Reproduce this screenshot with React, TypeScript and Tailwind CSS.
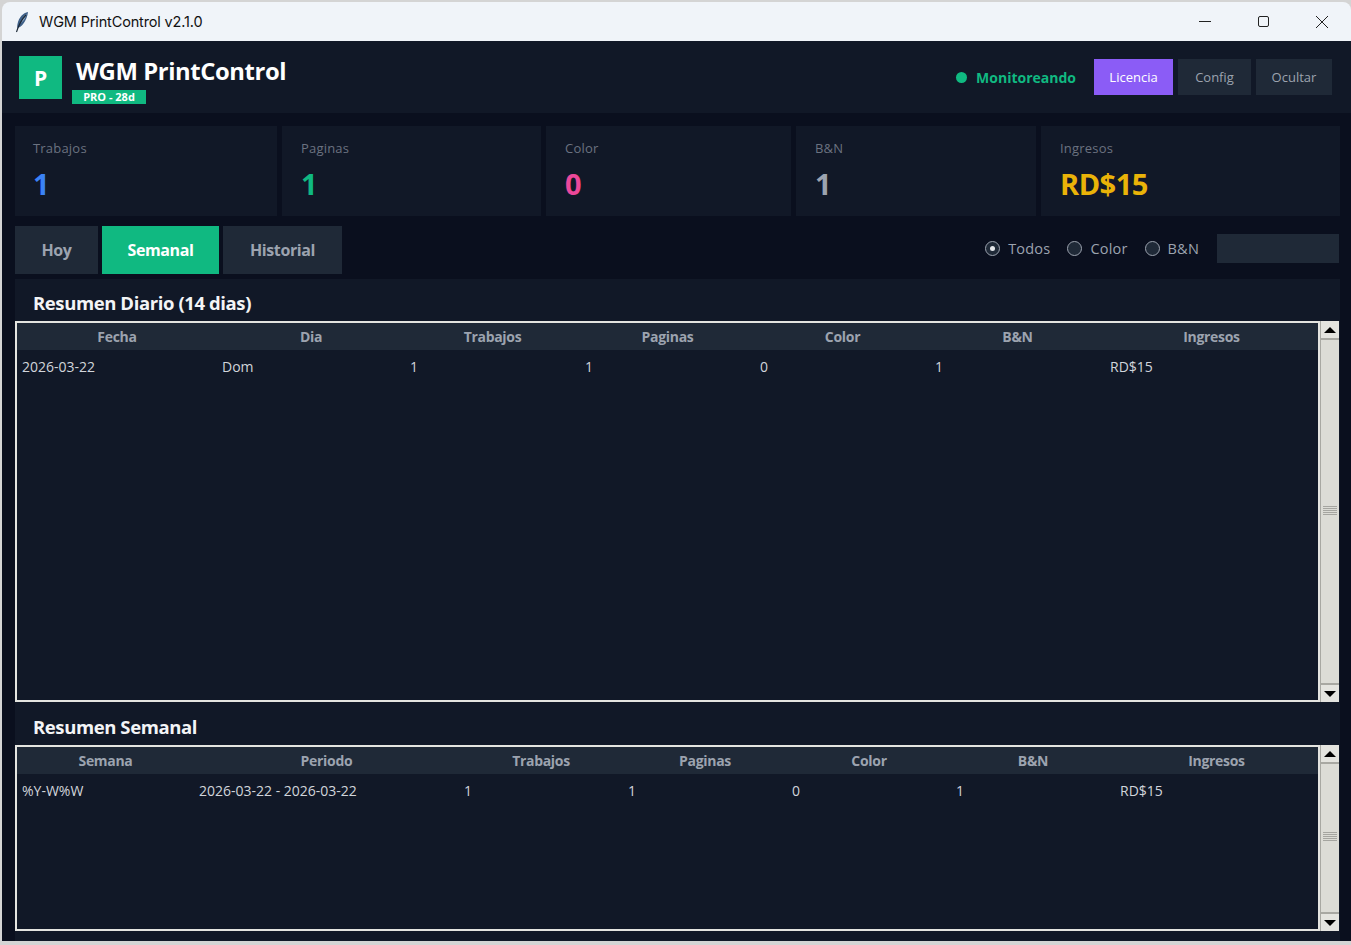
import React from "react";

const FONT = "font-['Open_Sans','Noto_Sans',sans-serif]";

function ScrollBar() {
  return (
    <div className="flex h-full w-[19px] flex-col bg-[#dcdcd6] border-l border-[#a8a8a2]">
      <div className="flex h-[19px] items-center justify-center border-b-2 border-[#a8a8a2] bg-[#e4e4df]">
        <div className="h-0 w-0 border-x-[6px] border-b-[6px] border-x-transparent border-b-black" />
      </div>
      <div className="flex flex-1 flex-col items-center justify-center pb-[3px]">
        <div className="flex w-[14px] flex-col gap-[1px]">
          {[0, 1, 2, 3, 4].map((i) => (
            <div key={i} className="h-[1px] bg-[#a5a5a0]" />
          ))}
        </div>
      </div>
      <div className="flex h-[19px] items-center justify-center border-t-2 border-[#a8a8a2] bg-[#e4e4df]">
        <div className="h-0 w-0 border-x-[6px] border-t-[6px] border-x-transparent border-t-black" />
      </div>
    </div>
  );
}

function DataTable({
  grid,
  head,
  row,
  height,
}: {
  grid: string;
  head: string[];
  row: string[];
  height: string;
}) {
  return (
    <div className={`flex ${height} pr-[1px]`}>
      <div className="flex-1 border-2 border-[#e4e4e0] bg-[#111827]">
        <div className={`grid h-[27px] items-center bg-[#1f2937] ${grid}`}>
          {head.map((h) => (
            <div key={h} className="text-center text-[14px] font-bold tracking-[-0.3px] text-[#9ca3af]">
              {h}
            </div>
          ))}
        </div>
        <div className={`grid h-[32px] items-center ${grid}`}>
          {row.map((c, i) => (
            <div key={i} className="pl-[5px] text-[14px] text-[#d1d5db]">
              {c}
            </div>
          ))}
        </div>
      </div>
      <ScrollBar />
    </div>
  );
}

function Stat({ label, value, color }: { label: string; value: string; color: string }) {
  return (
    <div className="flex h-[90px] flex-col bg-[#111827] pl-[19px] pt-[12px] first:pl-[18px]">
      <div className="text-[13px] leading-[20px] tracking-[0.2px] text-[#6b7280]">{label}</div>
      <div className={`mt-[8px] text-[29px] font-bold leading-[36px] tracking-[-0.5px] ${color}`}>{value}</div>
    </div>
  );
}

function Radio({ label, on }: { label: string; on?: boolean }) {
  return (
    <div className="flex items-center gap-[8px]">
      <div className="flex h-[15px] w-[15px] items-center justify-center rounded-full border border-[#9ca3af] bg-[#1f2937]">
        {on && <div className="h-[5px] w-[5px] rounded-full bg-[#e5e7eb]" />}
      </div>
      <span className="text-[14.5px] tracking-[0.2px] text-[#9ca3af]">{label}</span>
    </div>
  );
}

export default function App() {
  return (
    <div className={`h-[945px] w-[1351px] overflow-hidden bg-[#d4d4d4] pb-[4px] pl-[2px] pt-[2px] ${FONT}`}>
      <div className="flex h-full flex-col overflow-hidden rounded-t-lg">
        {/* title bar */}
        <div className="flex h-[39px] items-center justify-between bg-[#f0f4f9] pl-[12px]">
          <div className="flex items-center gap-[9px]">
            <svg width="16" height="22" viewBox="0 0 16 22">
              <path d="M14 1C9 2 5 6 3.5 13c-.4 2-.4 3 0 4 4-1 7-5 9-10 .8-2 1.300-4 1.500-6z" fill="#3f6088" />
              <path d="M12.500 3C10 5 8 8 7 12l3-3c1.300-2 2-4 2.500-6z" fill="#8fa8c4" />
              <path d="M12 4C8 8 5 13 2.500 21" stroke="#1b2733" strokeWidth="1.1" fill="none" />
            </svg>
            <span className="font-['Inter',sans-serif] text-[14.5px] tracking-[-0.15px] text-[#111]">WGM PrintControl v2.1.0</span>
          </div>
          <div className="flex items-center">
            <div className="flex h-[39px] w-[58px] items-center justify-center">
              <div className="h-[1px] w-[12px] bg-[#222]" />
            </div>
            <div className="flex h-[39px] w-[59px] items-center justify-center">
              <div className="h-[11px] w-[11px] rounded-[2px] border border-[#222]" />
            </div>
            <div className="flex h-[39px] w-[58px] items-center justify-center">
              <svg width="12" height="12" viewBox="0 0 12 12" stroke="#222" strokeWidth="1">
                <path d="M0 0L12 12M12 0L0 12" />
              </svg>
            </div>
          </div>
        </div>

        {/* header */}
        <div className="flex h-[72px] items-center justify-between bg-[#111827] pl-[17px] pr-[19px]">
          <div className="mt-[6px] flex items-start">
            <div className="flex h-[43px] w-[43px] items-center justify-center bg-[#10b981] pt-[3px] text-[21px] font-bold text-white">
              P
            </div>
            <div className="ml-[10px] flex flex-col">
              <div className="ml-[4px] text-[23.8px] font-bold leading-[30px] tracking-[-0.4px] text-white">WGM PrintControl</div>
              <div className="mt-[4px] flex h-[14px] w-[74px] items-center justify-center bg-[#10b981] pt-[1px] text-[11px] font-bold text-white">
                PRO - 28d
              </div>
            </div>
          </div>
          <div className="flex items-center">
            <div className="mr-[9px] h-[11px] w-[11px] rounded-full bg-[#10b981]" />
            <div className="mr-[18px] text-[14px] font-bold text-[#10b981]">Monitoreando</div>
            <div className="flex gap-[5px]">
              <div className="flex h-[36px] w-[79px] items-center justify-center bg-[#8b5cf6] pt-[1px] text-[13px] text-white">Licencia</div>
              <div className="flex h-[36px] w-[73px] items-center justify-center bg-[#1f2937] pt-[1px] text-[13px] text-[#9ca3af]">Config</div>
              <div className="flex h-[36px] w-[76px] items-center justify-center bg-[#1f2937] pt-[1px] text-[13px] text-[#9ca3af]">Ocultar</div>
            </div>
          </div>
        </div>

        {/* body */}
        <div className="flex flex-1 flex-col bg-[#0a0f1e] pl-[13px] pr-[11px] pt-[13px]">
          <div className="grid grid-cols-[262px_259px_245px_240px_299px] gap-[5px]">
            <Stat label="Trabajos" value="1" color="text-[#3b82f6]" />
            <Stat label="Paginas" value="1" color="text-[#10b981]" />
            <Stat label="Color" value="0" color="text-[#ec4899]" />
            <Stat label="B&N" value="1" color="text-[#9ca3af]" />
            <Stat label="Ingresos" value="RD$15" color="text-[#eab308]" />
          </div>

          <div className="mt-[10px] flex h-[48px] items-center justify-between">
            <div className="flex gap-[4px]">
              <div className="flex h-[48px] w-[83px] items-center justify-center bg-[#1f2937] text-[16px] font-bold tracking-[-0.4px] text-[#9ca3af]">Hoy</div>
              <div className="flex h-[48px] w-[117px] items-center justify-center bg-[#10b981] text-[16px] font-bold tracking-[-0.4px] text-white">Semanal</div>
              <div className="flex h-[48px] w-[119px] items-center justify-center bg-[#1f2937] text-[16px] font-bold tracking-[-0.4px] text-[#9ca3af]">Historial</div>
            </div>
            <div className="mb-[3px] mr-[1px] flex items-center">
              <div className="flex items-center gap-[17px]">
                <Radio label="Todos" on />
                <Radio label="Color" />
                <Radio label="B&N" />
              </div>
              <div className="ml-[18px] h-[29px] w-[122px] bg-[#1f2937]" />
            </div>
          </div>

          <div className="mt-[5px] flex-1 bg-[#111827]">
            <div className="flex h-[42px] items-center pl-[18px] pt-[6px] text-[18.5px] font-bold tracking-[-0.4px] text-[#f3f4f6]">
              Resumen Diario (14 dias)
            </div>
            <DataTable
              height="h-[381px]"
              grid="grid-cols-[200px_188px_175px_175px_175px_175px_213px]"
              head={["Fecha", "Dia", "Trabajos", "Paginas", "Color", "B&N", "Ingresos"]}
              row={["2026-03-22", "Dom", "1", "1", "0", "1", "RD$15"]}
            />
            <div className="flex h-[43px] items-center pl-[18px] pt-[6px] text-[18.5px] font-bold tracking-[-0.4px] text-[#f3f4f6]">
              Resumen Semanal
            </div>
            <DataTable
              height="h-[186px]"
              grid="grid-cols-[177px_265px_164px_164px_164px_164px_203px]"
              head={["Semana", "Periodo", "Trabajos", "Paginas", "Color", "B&N", "Ingresos"]}
              row={["%Y-W%W", "2026-03-22 - 2026-03-22", "1", "1", "0", "1", "RD$15"]}
            />
          </div>
        </div>
      </div>
    </div>
  );
}
